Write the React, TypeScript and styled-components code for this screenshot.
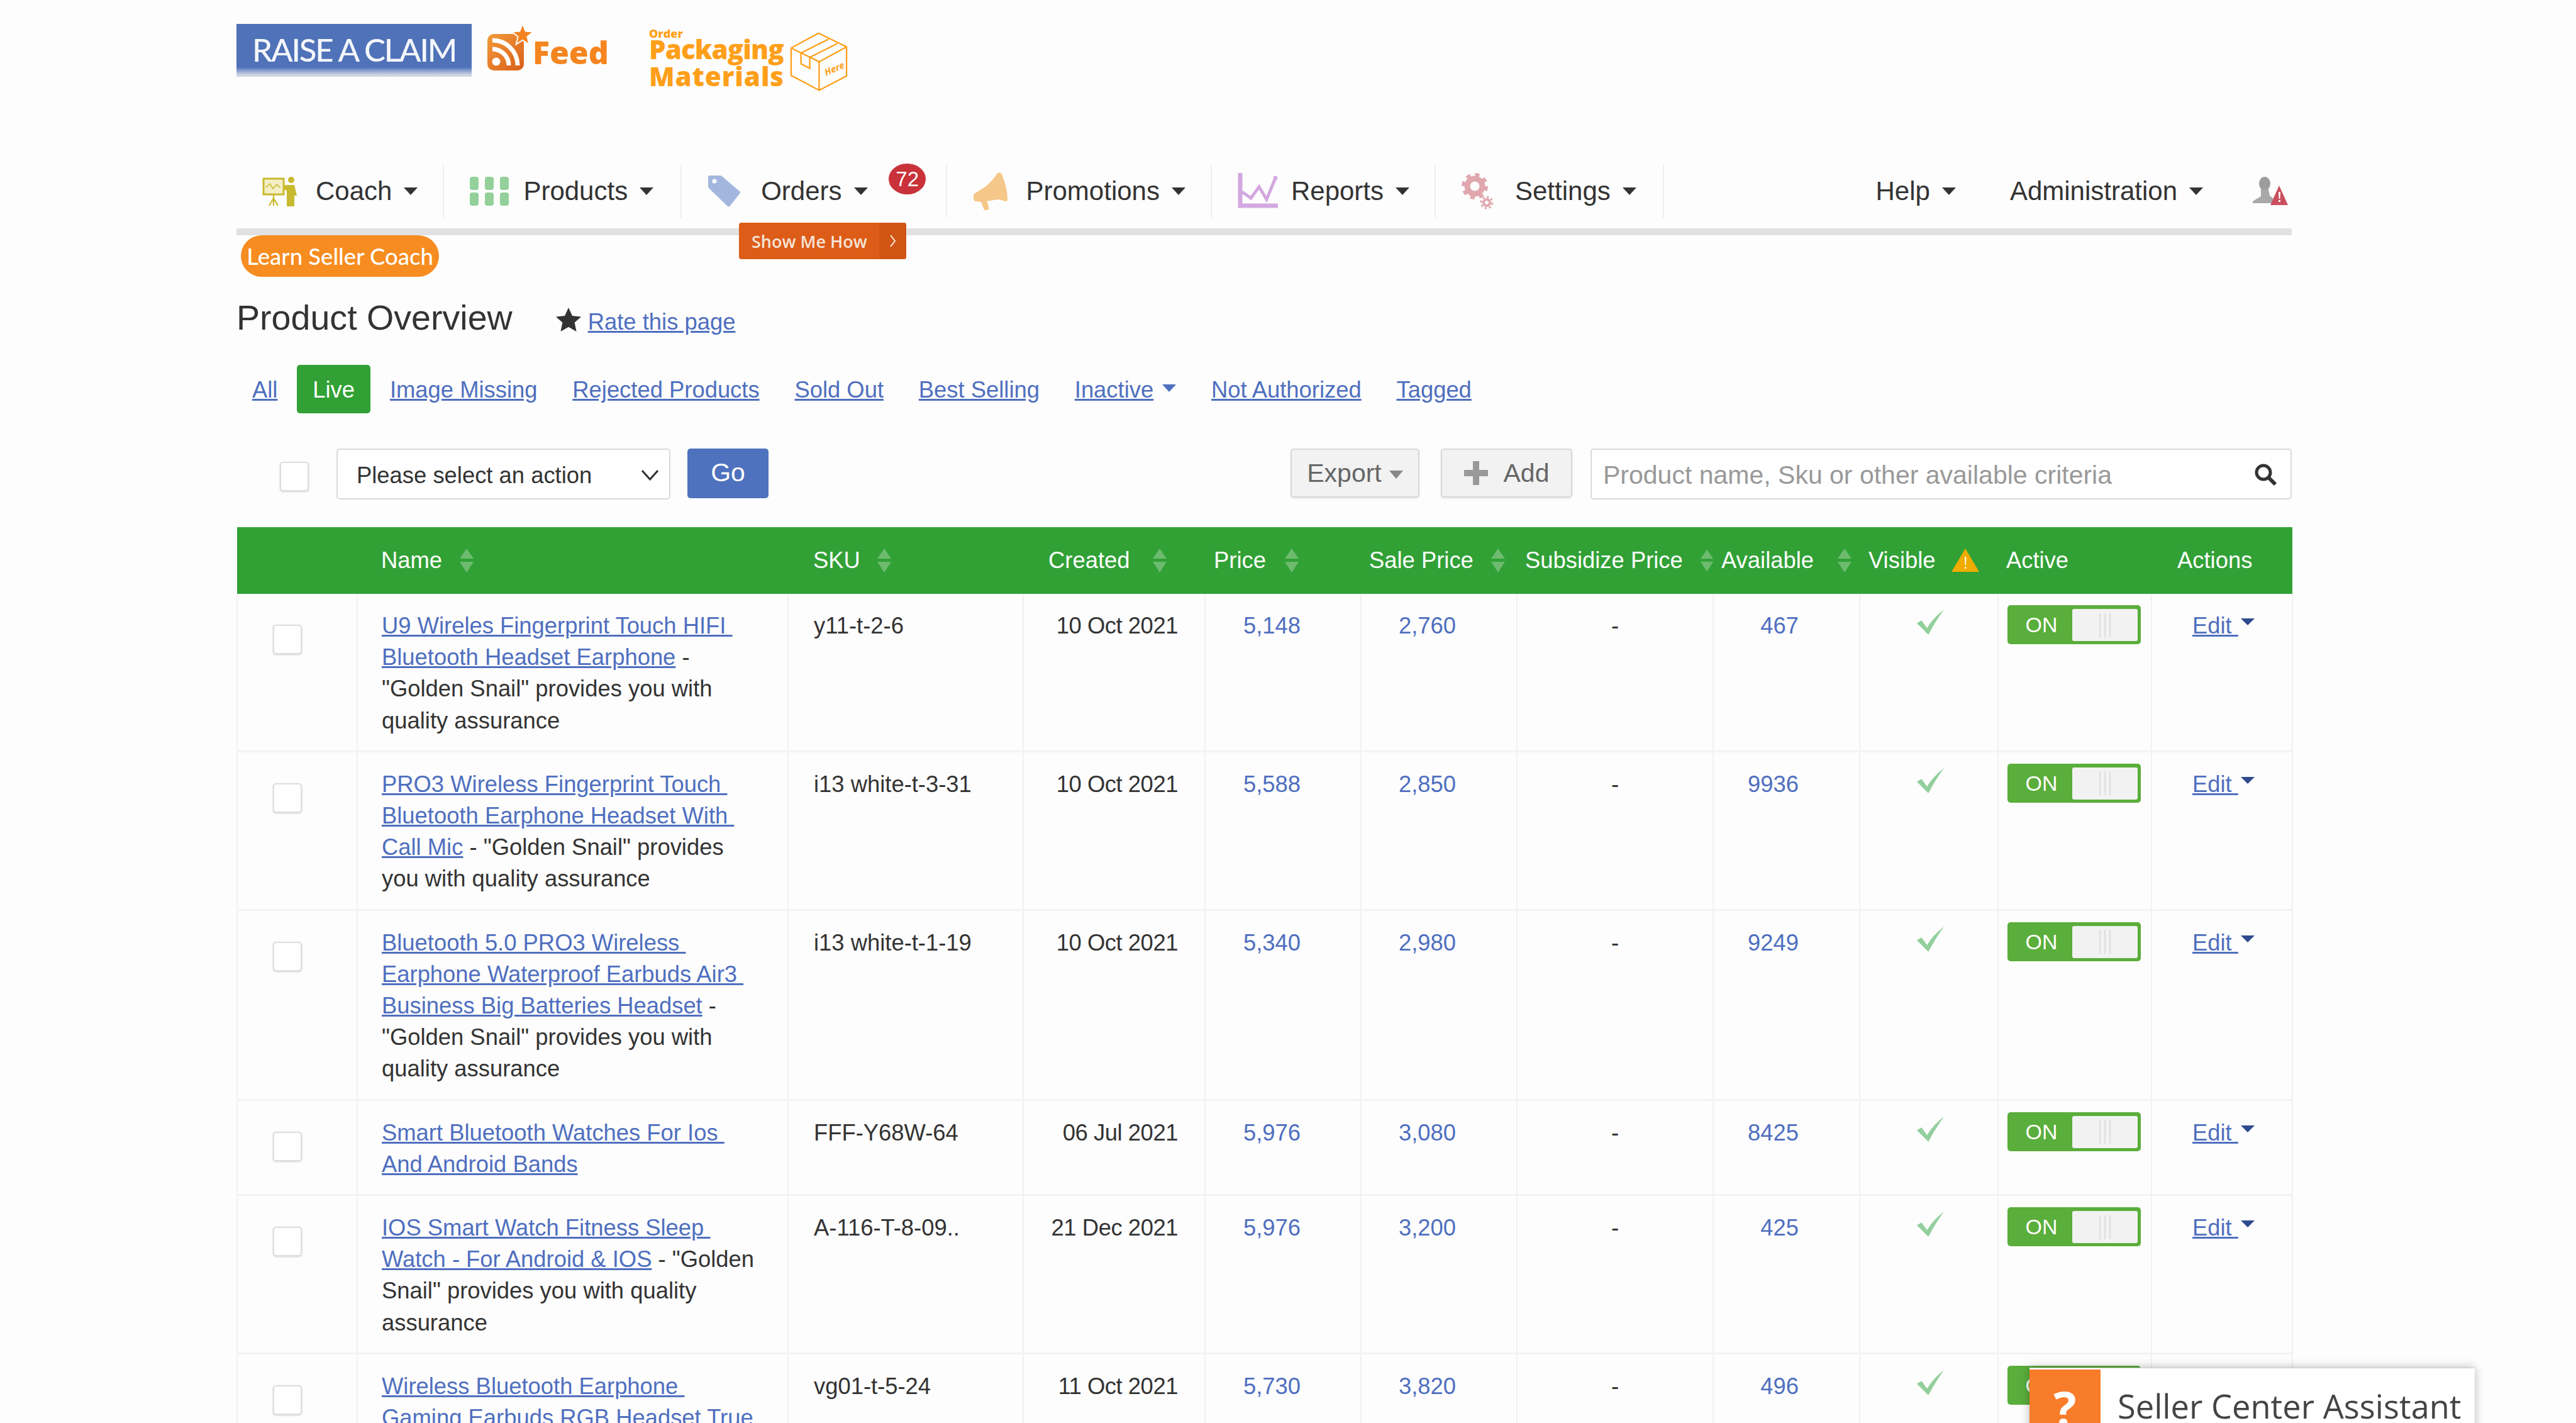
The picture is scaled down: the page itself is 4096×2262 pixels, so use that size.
import React from 'react';
import styled, { createGlobalStyle } from 'styled-components';

const GlobalStyle = createGlobalStyle`
  html, body {
    margin: 0;
    padding: 0;
    background: #fdfdfd;
    overflow: hidden;
  }
  body {
    font-family: "Liberation Sans", Arial, sans-serif;
    color: #333;
  }
`;

const LINK = '#4f6fbf';
const HUMAN = '"Open Sans", "Noto Sans", sans-serif';

const Page = styled.div`
  position: relative;
  width: 4096px;
  height: 2262px;
  overflow: hidden;
  padding-left: 376px;
  box-sizing: border-box;
`;

const Content = styled.div`
  width: 3268px;
`;

/* top banners */
const Banners = styled.div`
  height: 262px;
  box-sizing: border-box;
  padding-top: 38px;
  display: flex;
  align-items: flex-start;
`;

const ClaimBanner = styled.div`
  width: 374px;
  height: 84px;
  box-sizing: border-box;
  padding-bottom: 4px;
  display: flex;
  align-items: center;
  justify-content: center;
  background: linear-gradient(#4f72b8 0, #4f72b8 82%, #cdd3e4 96%, #d4d7df 100%);
  color: #f4f6fb;
  font-family: Lato, sans-serif;
  font-size: 51px;
  font-weight: 500;
  letter-spacing: -2.2px;
  white-space: nowrap;
`;

const FeedLink = styled.div`
  display: flex;
  align-items: flex-start;
  margin-left: 25px;
  margin-top: 8px;
  width: 257px;
`;

const FeedText = styled.span`
  font-family: ${HUMAN};
  font-size: 50px;
  font-weight: 800;
  line-height: 66px;
  color: #f5851f;
  margin-top: 4px;
  margin-left: -2px;
`;

const PackagingLink = styled.div`
  display: flex;
  align-items: flex-start;
`;

const PackagingText = styled.div`
  width: 224px;
  color: #ff9f1a;
  font-family: ${HUMAN};
  font-weight: 800;
  font-size: 42px;
  line-height: 43px;
  margin-top: 6px;
`;

const OrderText = styled.div`
  font-size: 18px;
  line-height: 19px;
  margin-bottom: -7px;
`;

const PackagingLine = styled.div<{ $ls: number }>`
  letter-spacing: ${p => p.$ls}px;
  white-space: nowrap;
`;

const BoxWrap = styled.div`
  margin-top: 13px;
`;

/* nav */
const Nav = styled.div`
  position: relative;
  height: 112px;
  box-sizing: border-box;
  border-bottom: 11px solid #e1e1e1;
  display: flex;
  align-items: flex-start;
`;

const NavItem = styled.div<{ $pr?: number; $bare?: boolean }>`
  position: relative;
  height: 84px;
  display: flex;
  align-items: center;
  padding-right: ${p => p.$pr ?? 40}px;
  font-size: 42px;
  color: #333;
  border-right: ${p => (p.$bare ? 'none' : '2px solid #eeeeee')};
  box-sizing: content-box;
`;

const NavIconSlot = styled.div`
  width: 126px;
  box-sizing: border-box;
  padding-left: 41px;
  display: flex;
  align-items: center;
`;

const NavCaret = styled.span`
  width: 0;
  height: 0;
  margin-left: 19px;
  border-left: 11px solid transparent;
  border-right: 11px solid transparent;
  border-top: 12px solid #333;
`;

const NavRight = styled.div`
  margin-left: auto;
  display: flex;
  align-items: flex-start;
  padding-right: 6px;
`;

const OrdersBadge = styled.span`
  position: absolute;
  left: 329px;
  top: -2px;
  width: 59px;
  height: 49px;
  border-radius: 50%;
  background: #c9323a;
  color: #fff;
  font-size: 33px;
  display: flex;
  align-items: center;
  justify-content: center;
`;

const ShowMeHow = styled.div`
  position: absolute;
  left: 799px;
  top: 92px;
  width: 266px;
  height: 58px;
  border-radius: 4px;
  background: #dd5c18;
  color: #f6e4d8;
  font-family: ${HUMAN};
  font-size: 27px;
  font-weight: 600;
  display: flex;
  align-items: center;
  overflow: hidden;
`;

const ShowMeLabel = styled.span`
  padding-left: 20px;
  width: 223px;
  box-sizing: border-box;
  white-space: nowrap;
`;

const ShowMeArrow = styled.span`
  flex: 1;
  align-self: stretch;
  background: #d05515;
  display: flex;
  align-items: center;
  justify-content: center;
`;

const LearnCoach = styled.div`
  margin-left: 7px;
  width: 315px;
  height: 66px;
  border-radius: 33px;
  background: #f78c20;
  color: #fff;
  font-family: Lato, sans-serif;
  font-size: 36.5px;
  font-weight: 500;
  display: flex;
  align-items: center;
  justify-content: center;
  white-space: nowrap;
`;

/* title */
const TitleRow = styled.div`
  margin-top: 34px;
  height: 62px;
  display: flex;
  align-items: baseline;
`;

const Title = styled.h1`
  margin: 0;
  font-size: 55.6px;
  line-height: 62px;
  font-weight: 400;
  color: #333;
`;

const StarWrap = styled.span`
  margin-left: 69px;
  margin-right: 11px;
  align-self: flex-end;
  height: 47px;
`;

const TextLink = styled.a`
  color: ${LINK};
  font-size: 36.4px;
  text-decoration: underline;
  white-space: pre;
`;

/* tabs */
const Tabs = styled.div`
  margin-top: 44px;
  height: 77px;
  display: flex;
  align-items: center;
  margin-left: -3px;
`;

const Tab = styled.a`
  padding: 3px 27.9px 0;
  color: ${LINK};
  font-size: 36.4px;
  text-decoration: underline;
  display: flex;
  align-items: center;
  white-space: nowrap;
`;

const ActiveTab = styled.span`
  margin: 0 3px;
  height: 77px;
  padding: 3px 25px 0;
  box-sizing: border-box;
  background: #31a136;
  border-radius: 5px;
  color: #fff;
  font-size: 36.4px;
  display: flex;
  align-items: center;
`;

const TabCaret = styled.span`
  width: 0;
  height: 0;
  margin-left: 14px;
  border-left: 11px solid transparent;
  border-right: 11px solid transparent;
  border-top: 12px solid ${LINK};
  margin-top: -6px;
  display: inline-block;
`;

/* toolbar */
const Toolbar = styled.div`
  margin-top: 56px;
  height: 81px;
  display: flex;
  align-items: flex-start;
`;

const CheckBox = styled.span`
  display: block;
  width: 46px;
  height: 47px;
  box-sizing: border-box;
  border: 2px solid #dedede;
  border-radius: 5px;
  background: #fff;
  box-shadow: 0 1px 3px rgba(0, 0, 0, 0.18);
`;

const BulkCheck = styled.div`
  margin: 21px 44px 0 69px;
`;

const ActionSelect = styled.div`
  width: 531px;
  height: 81px;
  box-sizing: border-box;
  padding: 4px 17px 0 30px;
  border: 2px solid #dadada;
  border-radius: 5px;
  background: #fff;
  font-size: 36.4px;
  color: #333;
  display: flex;
  align-items: center;
  justify-content: space-between;
`;

const GoButton = styled.div`
  margin-left: 27px;
  width: 129px;
  height: 79px;
  padding-bottom: 2px;
  box-sizing: border-box;
  background: #4f72bf;
  border-radius: 5px;
  color: #fff;
  font-size: 41px;
  display: flex;
  align-items: center;
  justify-content: center;
`;

const GreyButton = styled.div<{ $w: number; $ml: number }>`
  margin-left: ${p => p.$ml}px;
  width: ${p => p.$w}px;
  height: 78px;
  box-sizing: border-box;
  background: #f2f2f2;
  border: 2px solid #d8d8d8;
  border-radius: 5px;
  box-shadow: 0 2px 3px rgba(0, 0, 0, 0.08);
  color: #666;
  font-size: 41px;
  display: flex;
  align-items: center;
  justify-content: center;
`;

const ExportCaret = styled.span`
  width: 0;
  height: 0;
  margin: 4px 0 0 12px;
  border-left: 11px solid transparent;
  border-right: 11px solid transparent;
  border-top: 13px solid #888;
`;

const SearchBox = styled.div`
  margin-left: 29px;
  flex: 1;
  height: 81px;
  box-sizing: border-box;
  padding: 3px 21px 0 18px;
  background: #fff;
  border: 2px solid #dadada;
  border-radius: 5px;
  display: flex;
  align-items: center;
  justify-content: space-between;
  color: #999;
  font-size: 41px;
`;

/* table */
const Table = styled.table`
  margin-top: 44px;
  width: 3268px;
  table-layout: fixed;
  border-collapse: collapse;
`;

const Th = styled.th<{ $pl: number }>`
  height: 106px;
  box-sizing: border-box;
  padding: 0 0 1px ${p => p.$pl}px;
  background: #31a136;
  color: #fff;
  font-size: 36.4px;
  font-weight: 400;
  text-align: left;
  vertical-align: middle;
`;

const ThInner = styled.div<{ $gap: number }>`
  display: flex;
  align-items: center;
  gap: ${p => p.$gap}px;
  white-space: nowrap;
`;

const Tr = styled.tr`
  border-bottom: 3px solid #f3f3f3;
`;

const Td = styled.td<{ $align?: string; $pl?: number; $pr?: number }>`
  padding: 26px ${p => p.$pr ?? 0}px 22px ${p => p.$pl ?? 0}px;
  border-left: 2px solid #f1f1f1;
  border-right: 2px solid #f1f1f1;
  vertical-align: top;
  font-size: 36.4px;
  line-height: 50.2px;
  color: #333;
  text-align: ${p => p.$align ?? 'left'};
  white-space: pre;
`;

const RowCheck = styled.div`
  margin-top: 23px;
`;

const DateText = styled.span`
  letter-spacing: -0.45px;
`;

const Num = styled.span`
  color: ${LINK};
`;

const CheckMark = styled.div`
  margin-top: -1px;
  padding-left: 4px;
  display: flex;
  justify-content: center;
`;

const Toggle = styled.div`
  margin-top: -8px;
  width: 212px;
  height: 62px;
  box-sizing: border-box;
  padding: 6px 5px 5px 0;
  border-radius: 5px;
  background: #5aae3b;
  display: flex;
`;

const ToggleLabel = styled.span`
  width: 103px;
  box-sizing: border-box;
  padding-left: 5px;
  text-align: center;
  color: #fff;
  font-size: 34px;
  line-height: 51px;
`;

const ToggleThumb = styled.span`
  flex: 1;
  border-radius: 3px;
  background: #f2f2f2;
  display: flex;
  align-items: center;
  justify-content: center;
  gap: 6px;
`;

const Grip = styled.i`
  width: 2px;
  height: 38px;
  background: #dddddd;
`;

const EditCell = styled.div`
  display: flex;
  align-items: flex-start;
`;

const EditLink = styled.a`
  color: ${LINK};
  text-decoration: underline;
`;

const EditCaret = styled.span`
  width: 0;
  height: 0;
  margin: 13px 0 0 4px;
  border-left: 11px solid transparent;
  border-right: 11px solid transparent;
  border-top: 11px solid #2f4a8e;
`;

/* floating helper */
const Assistant = styled.div`
  position: absolute;
  left: 3227px;
  top: 2174px;
  width: 708px;
  height: 200px;
  padding-top: 2px;
  box-sizing: border-box;
  background: #fff;
  border-top: 1px solid #cccccc;
  box-shadow: 0 0 14px rgba(0, 0, 0, 0.28);
  display: flex;
  align-items: stretch;
`;

const AssistantIcon = styled.div`
  width: 113px;
  background: #f87c2a;
  color: #fff;
  font-family: ${HUMAN};
  font-size: 76px;
  font-weight: 700;
  line-height: 100px;
  text-align: center;
  padding-top: 11px;
  box-sizing: border-box;
`;

const AssistantTitle = styled.div`
  margin-left: 27px;
  padding-top: 28px;
  font-family: ${HUMAN};
  font-size: 52.4px;
  line-height: 60px;
  color: #444;
  white-space: nowrap;
`;

/* drawings */
const CoachIcon = () => (
  <svg width="55" height="48" viewBox="0 0 55 48" fill="none" stroke="#c9b92f">
    <rect x="2" y="4" width="32" height="25" strokeWidth="3" fill="#f4efc6" />
    <path d="M6 18l6-6 5 8 6-7 5 5" strokeWidth="1.6" />
    <path d="M18 30v5M18 35l-7 12M18 35l7 12M18 35v12" strokeWidth="2.2" />
    <circle cx="46" cy="6" r="5" fill="#c9b92f" stroke="none" />
    <path d="M36 14h15l4 17h-4v17h-12V23l-5-2z" fill="#c9b92f" stroke="none" />
  </svg>
);

const ProductsIcon = () => (
  <svg width="62" height="46" viewBox="0 0 62 46" fill="#93d09a">
    {[0, 24, 48].map(x => (
      <React.Fragment key={x}>
        <rect x={x} y="0" width="14" height="21" rx="4" />
        <rect x={x} y="25" width="14" height="21" rx="4" />
      </React.Fragment>
    ))}
  </svg>
);

const OrdersIcon = () => (
  <svg width="53" height="52" viewBox="0 0 53 52">
    <path
      d="M3 1h17q2 0 4 2l27 23q2 2 0 4L36 49q-2 3-5 0L3 22q-2-2-2-4V3q0-2 2-2z"
      fill="#a3b7de"
    />
    <circle cx="11" cy="10" r="3.5" fill="#fdfdfd" />
  </svg>
);

const PromotionsIcon = () => (
  <svg width="55" height="60" viewBox="0 0 55 60" fill="#f5c788">
    <path d="M42 0q4 0 6 9q7 18 7 34q0 3-3 3q-6-2-12-3L14 47 3 46q-4-6-1-12l19-12Q34 10 38 2z" />
    <path d="M13 47l9-2 4 13q-4 3-8 2z" />
  </svg>
);

const ReportsIcon = () => (
  <svg width="64" height="58" viewBox="0 0 64 58" fill="none" stroke="#d3a8e0">
    <path d="M4 0v52h60" strokeWidth="7" />
    <path d="M7 30l14 10 13-18 12 20 14-34" strokeWidth="5" />
    <circle cx="60" cy="8" r="3" fill="#d3a8e0" />
  </svg>
);

const SettingsIcon = () => (
  <svg width="50" height="58" viewBox="0 0 50 58" fill="none" stroke="#e0a8ae">
    <circle cx="21" cy="21" r="12" strokeWidth="9" />
    <circle cx="21" cy="21" r="18" strokeWidth="6" strokeDasharray="7 7.1" />
    <circle cx="40" cy="47" r="5" strokeWidth="4" />
    <circle cx="40" cy="47" r="9" strokeWidth="3" strokeDasharray="3.5 3.5" />
  </svg>
);

const UserIcon = () => (
  <svg width="58" height="46" viewBox="0 0 58 46">
    <ellipse cx="21" cy="11" rx="9" ry="11" fill="#9d9d9d" />
    <path d="M15 20h12l2 10 5 4v8H2v-3l13-8z" fill="#a8a8a8" />
    <path d="M44 14l14 31H30z" fill="#c94f5e" />
    <path d="M43 24h3l-.5 11h-2zM43 37h3v3h-3z" fill="#fff" />
  </svg>
);

const RssIcon = () => (
  <svg width="74" height="68" viewBox="0 0 74 68" style={{ overflow: 'visible' }}>
    <defs>
      <linearGradient id="rssFill" x1="0" y1="0" x2="1" y2="1">
        <stop offset="0" stopColor="#f39a3a" />
        <stop offset="1" stopColor="#da5f1a" />
      </linearGradient>
    </defs>
    <rect x="0" y="8" width="58" height="58" rx="10" fill="url(#rssFill)" />
    <circle cx="14" cy="52" r="6.5" fill="#fff" />
    <path d="M8 32a26 26 0 0 1 26 26M8 18a40 40 0 0 1 40 40" stroke="#fff" strokeWidth="7" fill="none" />
    <path
      d="M56-8l4.6 11.6 12.4.8-9.6 8 3.1 12.1L56 17.9l-10.5 6.6 3.1-12.1-9.6-8 12.4-.8z"
      fill="#f5821f"
      stroke="#fdfdfd"
      strokeWidth="2"
    />
  </svg>
);

const BoxIcon = () => (
  <svg width="92" height="96" viewBox="0 0 105 110" fill="none" stroke="#ff9f1a" strokeWidth="2.6">
    <path d="M52 2L2 29v50l51 27 50-26V27zM2 29l51 25 50-27M53 54v52" />
    <path d="M20 38L70 13M36 46L86 21" />
    <path d="M20 38v20l16 8V46" />
    <text
      x="66"
      y="80"
      fill="#ff9f1a"
      stroke="none"
      fontSize="17"
      fontWeight="700"
      fontStyle="italic"
      fontFamily="Open Sans, sans-serif"
      transform="rotate(-24 66 80)"
    >
      Here
    </text>
  </svg>
);

const SortArrows = () => (
  <svg width="22" height="38" viewBox="0 0 22 38" fill="#6dbb6f">
    <path d="M11 0l11 16H0zM0 21h22L11 38z" />
  </svg>
);

const WarnIcon = () => (
  <svg width="44" height="37" viewBox="0 0 44 37">
    <path d="M22 0l22 37H0z" fill="#f0ad00" />
    <path d="M21 13h2.4l-.4 13h-1.6zM21 29h2.4v3H21z" fill="#fff" />
  </svg>
);

const Tick = () => (
  <svg width="45" height="40" viewBox="0 0 40 37" fill="#93cf9c">
    <path d="M0 20l7-4 8 11Q24 12 40 0 28 16 17 37z" />
  </svg>
);

const Star = () => (
  <svg width="40" height="38" viewBox="0 0 40 38" fill="#333">
    <path d="M20 0l6 13 14 1.6-10.4 9.2L32.6 38 20 30.8 7.4 38l3-14.200L0 14.600 14 13z" />
  </svg>
);

const Chevron = () => (
  <svg width="27" height="17" viewBox="0 0 27 17" fill="none" stroke="#333" strokeWidth="3">
    <path d="M1 1l12.500 14L26 1" />
  </svg>
);

const SearchIcon = () => (
  <svg width="36" height="36" viewBox="0 0 36 36" fill="none" stroke="#333">
    <circle cx="14" cy="14" r="11" strokeWidth="5" />
    <path d="M22 22l11 11" strokeWidth="6" />
  </svg>
);

const PlusIcon = () => (
  <svg width="38" height="38" viewBox="0 0 38 38" fill="#999" style={{ marginRight: 25 }}>
    <path d="M14 0h10v14h14v10H24v14H14V24H0V14h14z" />
  </svg>
);

const ShowArrow = () => (
  <svg width="10" height="20" viewBox="0 0 10 20" fill="none" stroke="#fbe9dc" strokeWidth="2">
    <path d="M1 1l7 9-7 9" />
  </svg>
);

const navLeft = [
  { label: 'Coach', icon: <CoachIcon /> },
  { label: 'Products', icon: <ProductsIcon />, pr: 43 },
  { label: 'Orders', icon: <OrdersIcon />, badge: '72', pr: 124 },
  { label: 'Promotions', icon: <PromotionsIcon /> },
  { label: 'Reports', icon: <ReportsIcon /> },
  { label: 'Settings', icon: <SettingsIcon />, pr: 42 },
];

const columns = [
  { w: 191, pl: 0, label: '', gap: 0 },
  { w: 685, pl: 38, label: 'Name', gap: 28, sort: true },
  { w: 374, pl: 40, label: 'SKU', gap: 27, sort: true },
  { w: 289, pl: 40, label: 'Created', gap: 37, sort: true },
  { w: 248, pl: 14, label: 'Price', gap: 30, sort: true },
  { w: 248, pl: 13, label: 'Sale Price', gap: 28, sort: true },
  { w: 312, pl: 13, label: 'Subsidize Price', gap: 28, sort: true },
  { w: 233, pl: 13, label: 'Available', gap: 38, sort: true },
  { w: 220, pl: 14, label: 'Visible', gap: 25, warn: true },
  { w: 244, pl: 13, label: 'Active', gap: 0 },
  { w: 224, pl: 41, label: 'Actions', gap: 0 },
];

const rows = [
  {
    link: ['U9 Wireles Fingerprint Touch HIFI ', 'Bluetooth Headset Earphone'],
    tail: [' -', '"Golden Snail" provides you with', 'quality assurance'],
    sku: 'y11-t-2-6',
    date: '10 Oct 2021',
    price: '5,148',
    sale: '2,760',
    stock: '467',
  },
  {
    link: ['PRO3 Wireless Fingerprint Touch ', 'Bluetooth Earphone Headset With ', 'Call Mic'],
    tail: [' - "Golden Snail" provides', 'you with quality assurance'],
    sku: 'i13 white-t-3-31',
    date: '10 Oct 2021',
    price: '5,588',
    sale: '2,850',
    stock: '9936',
  },
  {
    link: ['Bluetooth 5.0 PRO3 Wireless ', 'Earphone Waterproof Earbuds Air3 ', 'Business Big Batteries Headset'],
    tail: [' -', '"Golden Snail" provides you with', 'quality assurance'],
    sku: 'i13 white-t-1-19',
    date: '10 Oct 2021',
    price: '5,340',
    sale: '2,980',
    stock: '9249',
  },
  {
    link: ['Smart Bluetooth Watches For Ios ', 'And Android Bands'],
    tail: [],
    sku: 'FFF-Y68W-64',
    date: '06 Jul 2021',
    price: '5,976',
    sale: '3,080',
    stock: '8425',
  },
  {
    link: ['IOS Smart Watch Fitness Sleep ', 'Watch - For Android & IOS'],
    tail: [' - "Golden', 'Snail" provides you with quality', 'assurance'],
    sku: 'A-116-T-8-09..',
    date: '21 Dec 2021',
    price: '5,976',
    sale: '3,200',
    stock: '425',
  },
  {
    link: ['Wireless Bluetooth Earphone ', 'Gaming Earbuds RGB Headset True'],
    tail: [],
    sku: 'vg01-t-5-24',
    date: '11 Oct 2021',
    price: '5,730',
    sale: '3,820',
    stock: '496',
  },
];

const ProductName = ({ link, tail }: { link: string[]; tail: string[] }) => (
  <>
    {link.map((line, i) => (
      <React.Fragment key={line}>
        {i > 0 && <br />}
        <TextLink>{line}</TextLink>
      </React.Fragment>
    ))}
    {tail.map((line, i) => (
      <React.Fragment key={line}>
        {i > 0 && <br />}
        {line}
      </React.Fragment>
    ))}
  </>
);

const App = () => {
  return (
    <Page>
      <GlobalStyle />
      <Content>
        <Banners>
          <ClaimBanner>RAISE A CLAIM</ClaimBanner>
          <FeedLink>
            <RssIcon />
            <FeedText>Feed</FeedText>
          </FeedLink>
          <PackagingLink>
            <PackagingText>
              <OrderText>Order</OrderText>
              <PackagingLine $ls={-0.9}>Packaging</PackagingLine>
              <PackagingLine $ls={0.9}>Materials</PackagingLine>
            </PackagingText>
            <BoxWrap>
              <BoxIcon />
            </BoxWrap>
          </PackagingLink>
        </Banners>

        <Nav>
          {navLeft.map(item => (
            <NavItem key={item.label} $pr={item.pr}>
              <NavIconSlot>{item.icon}</NavIconSlot>
              {item.label}
              <NavCaret />
              {item.badge && <OrdersBadge>{item.badge}</OrdersBadge>}
            </NavItem>
          ))}
          <NavRight>
            <NavItem $bare $pr={86}>
              Help
              <NavCaret />
            </NavItem>
            <NavItem $bare $pr={77}>
              Administration
              <NavCaret />
            </NavItem>
            <NavItem $bare $pr={0}>
              <UserIcon />
            </NavItem>
          </NavRight>
          <ShowMeHow>
            <ShowMeLabel>Show Me How</ShowMeLabel>
            <ShowMeArrow>
              <ShowArrow />
            </ShowMeArrow>
          </ShowMeHow>
        </Nav>

        <LearnCoach>Learn Seller Coach</LearnCoach>

        <TitleRow>
          <Title>Product Overview</Title>
          <StarWrap>
            <Star />
          </StarWrap>
          <TextLink>Rate this page</TextLink>
        </TitleRow>

        <Tabs>
          <Tab>All</Tab>
          <ActiveTab>Live</ActiveTab>
          <Tab>Image Missing</Tab>
          <Tab>Rejected Products</Tab>
          <Tab>Sold Out</Tab>
          <Tab>Best Selling</Tab>
          <Tab>
            Inactive
            <TabCaret />
          </Tab>
          <Tab>Not Authorized</Tab>
          <Tab>Tagged</Tab>
        </Tabs>

        <Toolbar>
          <BulkCheck>
            <CheckBox />
          </BulkCheck>
          <ActionSelect>
            Please select an action
            <Chevron />
          </ActionSelect>
          <GoButton>Go</GoButton>
          <GreyButton $w={205} $ml={830}>
            Export
            <ExportCaret />
          </GreyButton>
          <GreyButton $w={209} $ml={34}>
            <PlusIcon />
            Add
          </GreyButton>
          <SearchBox>
            Product name, Sku or other available criteria
            <SearchIcon />
          </SearchBox>
        </Toolbar>

        <Table>
          <colgroup>
            {columns.map((c, i) => (
              <col key={i} width={c.w} />
            ))}
          </colgroup>
          <thead>
            <tr>
              {columns.map((c, i) => (
                <Th key={i} $pl={c.pl}>
                  <ThInner $gap={c.gap}>
                    {c.label}
                    {c.sort && <SortArrows />}
                    {c.warn && <WarnIcon />}
                  </ThInner>
                </Th>
              ))}
            </tr>
          </thead>
          <tbody>
            {rows.map(r => (
              <Tr key={r.sku}>
                <Td $pl={56}>
                  <RowCheck>
                    <CheckBox />
                  </RowCheck>
                </Td>
                <Td $pl={38}>
                  <ProductName link={r.link} tail={r.tail} />
                </Td>
                <Td $pl={40}>{r.sku}</Td>
                <Td $align="right" $pr={42}>
                  <DateText>{r.date}</DateText>
                </Td>
                <Td $align="right" $pr={95}>
                  <Num>{r.price}</Num>
                </Td>
                <Td $align="right" $pr={96}>
                  <Num>{r.sale}</Num>
                </Td>
                <Td $align="center">-</Td>
                <Td $align="right" $pr={96}>
                  <Num>{r.stock}</Num>
                </Td>
                <Td>
                  <CheckMark>
                    <Tick />
                  </CheckMark>
                </Td>
                <Td $pl={14}>
                  <Toggle>
                    <ToggleLabel>ON</ToggleLabel>
                    <ToggleThumb>
                      <Grip />
                      <Grip />
                      <Grip />
                    </ToggleThumb>
                  </Toggle>
                </Td>
                <Td $pl={64}>
                  <EditCell>
                    <EditLink>Edit </EditLink>
                    <EditCaret />
                  </EditCell>
                </Td>
              </Tr>
            ))}
          </tbody>
        </Table>
      </Content>

      <Assistant>
        <AssistantIcon>?</AssistantIcon>
        <AssistantTitle>Seller Center Assistant</AssistantTitle>
      </Assistant>
    </Page>
  );
};

export default App;
